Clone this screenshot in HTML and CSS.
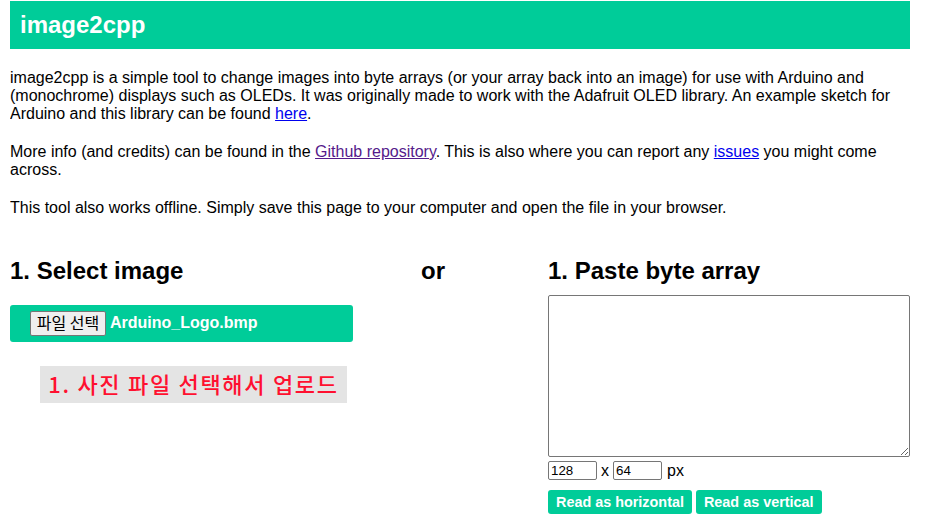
FILE: index.html
```html
<!DOCTYPE html>
<html lang="en">
<head>
<meta charset="utf-8">
<title>image2cpp</title>
<link rel="stylesheet" href="styles.css">
</head>
<body>
<header class="title"><h1>image2cpp</h1></header>
<section class="intro">
<p>image2cpp is a simple tool to change images into byte arrays (or your array back into an image) for use with Arduino and (monochrome) displays such as OLEDs. It was originally made to work with the Adafruit OLED library. An example sketch for Arduino and this library can be found <a href="#here">here</a>.</p>
<p>More info (and credits) can be found in the <a class="visited" href="#repo">Github repository</a>. This is also where you can report any <a href="#issues">issues</a> you might come across.</p>
<p>This tool also works offline. Simply save this page to your computer and open the file in your browser.</p>
</section>
<main class="columns">
<section class="col-left">
<h2>1. Select image</h2>
<div class="file-bar"><span class="file-btn">파일 선택</span><span class="file-name">Arduino_Logo.bmp</span></div>
<div class="note"><span>1. 사진 파일 선택해서 업로드</span></div>
</section>
<section class="col-or"><h2>or</h2></section>
<section class="col-right">
<h2>1. Paste byte array</h2>
<textarea class="bytes"></textarea>
<div class="size-row"><input class="size" type="text" value="128"><span>x</span><input class="size" type="text" value="64"><span class="px">px</span></div>
<div class="btn-row"><button class="read">Read as horizontal</button><button class="read">Read as vertical</button></div>
</section>
</main>
</body>
</html>
```
FILE: styles.css
```css
* { box-sizing: border-box; }
html, body { margin: 0; padding: 0; }
body {
  width: 900px;
  margin-left: 10px;
  padding-top: 1px;
  font-family: "Liberation Sans", Arial, sans-serif;
  font-size: 16px;
  line-height: 18px;
  color: #000;
  background: #fff;
  overflow: hidden;
}
.title {
  height: 48px;
  background: #00cc99;
  padding: 10px 10px 0;
}
.title h1 {
  margin: 0;
  font-size: 24px;
  line-height: 28px;
  font-weight: bold;
  color: #fff;
}
.intro { padding-top: 20px; }
.intro p { margin: 0 0 20px; }
a { color: #0000ee; }
a.visited { color: #551a8b; }
.columns {
  display: flex;
  margin-top: 40px;
}
h2 {
  margin: 0;
  font-size: 24px;
  line-height: 28px;
  font-weight: bold;
}
.col-left { width: 411px; }
.col-or { width: 127px; }
.col-right { width: 362px; }
.file-bar {
  width: 343px;
  height: 37px;
  margin-top: 20px;
  padding: 6px 0 0 20px;
  display: flex;
  align-items: flex-start;
  gap: 4px;
  background: #00cc99;
  border-radius: 3px;
}
.file-btn {
  display: block;
  width: 76px;
  height: 25px;
  border: 1px solid #767676;
  border-radius: 2px;
  background: #efefef;
  font-family: "Noto Sans CJK KR", sans-serif;
  font-size: 16px;
  line-height: 20px;
  text-align: center;
  color: #000;
}
.file-name {
  font-weight: bold;
  color: #fff;
  line-height: 24px;
}
.note {
  width: 307px;
  height: 37px;
  margin: 24px 0 0 30px;
  background: #e4e4e4;
  color: #ff1030;
  font-family: "Noto Sans CJK KR", sans-serif;
  font-size: 22px;
  font-weight: 500;
  line-height: 35px;
  letter-spacing: 1.7px;
  text-align: center;
  white-space: nowrap;
}
.bytes {
  display: block;
  width: 362px;
  height: 162px;
  margin: 10px 0 0;
  border: 1px solid #767676;
  border-radius: 2px;
  padding: 2px;
  background: #fff;
}
.size-row {
  display: flex;
  align-items: center;
  height: 19px;
  margin-top: 4px;
  gap: 4px;
}
.size {
  width: 49px;
  height: 19px;
  padding: 1px 2px;
  border: 1px solid #767676;
  border-radius: 2px;
  font-family: "Liberation Sans", Arial, sans-serif;
  font-size: 13.33px;
  color: #000;
}
.px { margin-left: 1px; }
.btn-row {
  display: flex;
  gap: 4px;
  margin-top: 10px;
}
.read {
  height: 24px;
  padding: 0 8px;
  border: 0;
  border-radius: 3px;
  background: #00cc99;
  color: #fff;
  font-family: "Liberation Sans", Arial, sans-serif;
  font-size: 14.4px;
  font-weight: bold;
}
```
